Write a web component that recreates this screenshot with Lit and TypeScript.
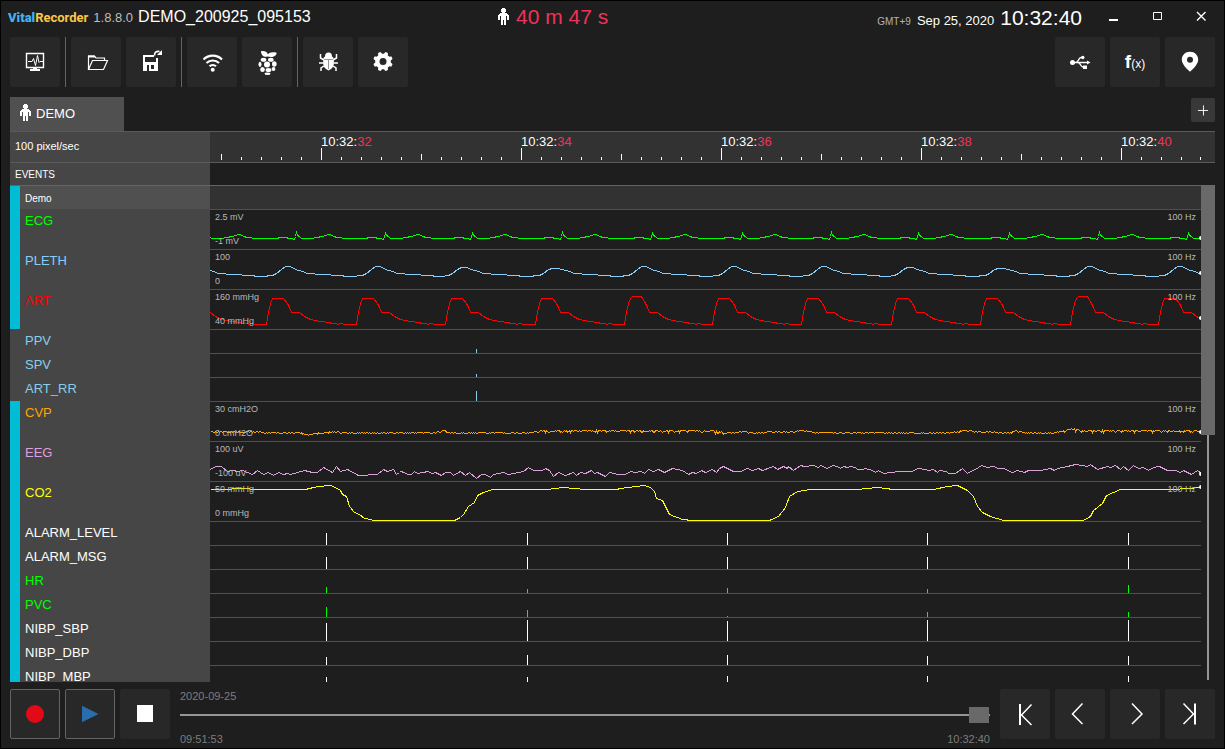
import { LitElement, html, svg, css, nothing } from "lit";
import { customElement, property, state } from "lit/decorators.js";
import { styleMap } from "lit/directives/style-map.js";

type Pt = [number, number];

interface Track {
  name: string;
  color: string;
  grouped: boolean;
  max?: string;
  min?: string;
  points?: Pt[];
  head?: number; // vertical position of the live-sample marker
  marks?: Pt[]; // x position, bar height
}

/* ---------- waveform data (lane pixels, 100 px = 1 s) ---------- */

const beats = (onsets: number[], shape: (i: number) => Pt[]): Pt[] =>
  onsets.flatMap((x, i) => shape(i).map(([dx, y]): Pt => [x + dx, y]));

const ecg = beats(
  [-4, 86, 175, 262, 352, 442, 532, 621, 708, 799, 889, 978],
  (i) => [
    [-20, 29], [-16, 28], [-10, 28], [-8, 29], [-4, 29], [-3, 30], [-2, 30],
    [-1, 27], [0, i % 3 === 1 ? 23 : 24], [1, 26], [3, 27], [5, 29], [17, 29],
    [18, 28], [22, 28], [24, 27], [27, 27], [28, 26], [30, 26], [31, 25],
    [34, 25], [35, 26], [38, 27], [40, 28], [45, 28], [46, 29],
  ]
);

const pleth = beats(
  [-12, 77, 167, 253, 344, 433, 523, 613, 699, 790, 879, 969],
  (i) => {
    const top = [17, 17, 17, 18, 19, 18][i % 5];
    return [
      [-18, 26], [-15, 26], [-11, 24], [-6, 20], [-2, top], [3, top], [8, 20],
      [15, 22], [20, 24], [27, 24], [28, 25], [43, 25], [44, 26], [54, 26],
      [58, 27], [67, 27],
    ];
  }
);

const art = beats(
  [-33, 56, 146, 235, 325, 414, 502, 591, 681, 770, 860, 948],
  (i) => {
    const top = i === 5 || i === 10 ? 7 : 9;
    return [
      [0, 35], [1, 28], [4, 14], [6, 9], [8, top], [17, top],
      [21, 14], [23, 18], [25, 23], [33, 23], [38, 27], [44, 30], [54, 32],
      [63, 33], [65, 34], [70, 34], [71, 35], [74, 34], [79, 35], [87, 35],
    ];
  }
);

const cvp: Pt[] = [];
{
  const level: Pt[] = [
    [0, 30], [14, 30], [22, 30], [44, 30], [62, 31], [90, 31], [98, 33],
    [110, 31], [126, 30], [134, 31], [190, 31], [222, 31], [234, 29], [240, 31],
    [318, 31], [333, 29], [500, 29], [516, 31], [534, 30], [542, 31], [598, 29],
    [606, 31], [740, 31], [752, 29], [800, 31], [806, 29], [814, 31], [845, 31],
    [852, 29], [863, 27], [870, 29], [990, 29],
  ];
  let seed = 7;
  let seg = 0;
  for (let x = 0; x <= 990; x += 1) {
    while (seg < level.length - 2 && x > level[seg + 1][0]) seg += 1;
    const [x0, y0] = level[seg];
    const [x1, y1] = level[seg + 1];
    seed = (seed * 1103515245 + 12345) % 2147483648;
    const r = seed / 2147483648;
    const busy = (x > 333 && x < 516) || x > 852;
    const jitter = r > 0.88 && busy ? 2 : r > 0.55 ? 1 : 0;
    cvp.push([x, Math.round(y0 + ((y1 - y0) * (x - x0)) / (x1 - x0)) + jitter]);
  }
}

/* Samples are stored at three units per pixel, in blocks with their own start. */
const unpack = (blocks: [number, number[]][], dy: number): Pt[] =>
  blocks.flatMap(([start, v]) => {
    const out: Pt[] = [];
    for (let i = 0; i < v.length; i += 2) {
      out.push([start + Math.round(v[i] / 3), Math.floor(v[i + 1] / 3) - dy]);
    }
    return out;
  });

const eeg = unpack(
  [
    [-210, [630, 238, 645, 230, 662, 230, 680, 243, 700, 240, 712, 245, 725, 240,
      755, 254, 772, 242, 788, 254, 803, 246, 820, 257, 833, 246, 848, 254, 860,
      249, 870, 254, 890, 247, 912, 240, 935, 248, 950, 246, 968, 232, 995, 247,
      1007, 229, 1020, 245, 1042, 238, 1075, 255, 1130, 252, 1148, 238, 1160,
      243, 1180, 238, 1188, 254, 1196, 247]],
    [190, [0, 245, 12, 247, 20, 254, 32, 254, 43, 245, 52, 250, 70, 248, 80, 244,
      95, 250, 105, 247, 123, 257, 135, 247, 150, 247, 158, 256, 180, 244, 195,
      257, 208, 247, 228, 266, 243, 252, 255, 252, 270, 262, 280, 252, 310, 246,
      325, 252, 370, 243, 385, 232, 400, 241, 425, 241, 435, 234, 447, 240, 460,
      260, 475, 246, 495, 257, 518, 246, 528, 257, 540, 247, 555, 249, 572, 241,
      583, 249, 592, 246, 615, 260, 628, 246, 655, 252, 675, 252, 690, 245, 705,
      247, 722, 243, 733, 250, 745, 238, 760, 245, 775, 238, 792, 247, 815, 235,
      845, 240, 865, 254, 875, 248, 887, 250, 903, 241, 915, 248, 937, 238, 948,
      246, 958, 234, 968, 229, 1000, 244, 1020, 244, 1040, 234, 1055, 240, 1073,
      236, 1085, 241, 1120, 230, 1132, 237, 1150, 230, 1160, 235, 1165, 230,
      1180, 241, 1200, 226, 1212, 230, 1240, 227, 1253, 232]],
    [610, [0, 226, 20, 234, 35, 226, 50, 230, 60, 234, 70, 228, 80, 233, 90, 229,
      105, 231, 112, 238, 125, 238, 135, 236, 155, 242, 165, 248, 175, 242, 190,
      251, 235, 244, 275, 244, 290, 235, 315, 237, 325, 241, 340, 238, 350, 246,
      358, 241, 378, 244, 385, 249, 405, 250, 425, 236, 442, 251, 455, 240, 465,
      237, 483, 226, 500, 232, 520, 230, 535, 236, 550, 234, 575, 246, 590, 240,
      612, 247, 625, 241, 660, 241, 690, 234, 702, 242, 712, 235, 740, 230, 765,
      223, 800, 228, 810, 223, 830, 238, 860, 230, 870, 233, 885, 227, 900, 237,
      910, 228, 925, 241, 940, 225, 955, 234, 970, 231, 985, 240, 1000, 233,
      1018, 230, 1040, 242, 1065, 240, 1080, 247, 1090, 241, 1112, 252, 1130,
      240, 1142, 250]],
  ],
  51
);

const co2 = unpack(
  [
    [-210, [630, 298, 690, 298, 700, 295, 797, 297, 915, 298, 940, 293, 955, 290,
      990, 286, 1010, 294, 1020, 302, 1027, 314, 1037, 320, 1046, 350, 1062, 367,
      1082, 375, 1087, 382, 1120, 391, 1200, 391]],
    [190, [0, 391, 162, 391, 180, 382, 190, 372, 205, 350, 222, 337, 230, 317,
      250, 307, 275, 298, 440, 298, 485, 292, 525, 295, 550, 298, 645, 298, 680,
      293, 732, 286, 750, 291, 762, 305, 768, 325, 785, 330, 797, 355, 808, 372,
      845, 387, 875, 391, 1107, 391, 1135, 378, 1155, 352, 1168, 320, 1190, 303,
      1230, 298]],
    [610, [0, 298, 108, 297, 170, 292, 220, 298, 340, 298, 380, 290, 410, 286,
      440, 302, 460, 318, 470, 350, 485, 367, 510, 380, 548, 391, 788, 391, 810,
      380, 820, 362, 845, 340, 857, 315, 900, 298, 1060, 298, 1142, 291]],
  ],
  91
);

const every2s = (...h: number[]): Pt[] =>
  h.map((v, i): Pt => [[116, 317, 517, 717, 918][i], v]);

const TRACKS: Track[] = [
  { name: "ECG", color: "#00ff00", grouped: true, max: "2.5 mV", min: "-1 mV", points: ecg, head: 26 },
  { name: "PLETH", color: "#87cefa", grouped: true, max: "100", min: "0", points: pleth, head: 21 },
  { name: "ART", color: "#ff0000", grouped: true, max: "160 mmHg", min: "40 mmHg", points: art, head: 26 },
  { name: "PPV", color: "#87ceeb", grouped: false, marks: [[266, 4]] },
  { name: "SPV", color: "#87ceeb", grouped: false, marks: [[266, 3]] },
  { name: "ART_RR", color: "#87ceeb", grouped: false, marks: [[266, 10]] },
  { name: "CVP", color: "#ffa500", grouped: true, max: "30 cmH2O", min: "0 cmH2O", points: cvp, head: 28 },
  { name: "EEG", color: "#dda0dd", grouped: true, max: "100 uV", min: "-100 uV", points: eeg, head: 30 },
  { name: "CO2", color: "#ffff00", grouped: true, max: "50 mmHg", min: "0 mmHg", points: co2, head: 3 },
  { name: "ALARM_LEVEL", color: "#ffffff", grouped: true, marks: every2s(12, 12, 12, 12, 12) },
  { name: "ALARM_MSG", color: "#ffffff", grouped: true, marks: every2s(12, 12, 12, 12, 12) },
  { name: "HR", color: "#00ff00", grouped: true, marks: every2s(6, 4, 5, 4, 8) },
  { name: "PVC", color: "#00ff00", grouped: true, marks: every2s(10, 7, 1, 5, 5) },
  { name: "NIBP_SBP", color: "#ffffff", grouped: true, marks: every2s(18, 21, 20, 21, 21) },
  { name: "NIBP_DBP", color: "#ffffff", grouped: true, marks: every2s(8, 10, 10, 9, 9) },
  { name: "NIBP_MBP", color: "#ffffff", grouped: true, marks: every2s(12, 12, 13, 13, 13) },
];

/* ---------- icons, drawn in a 26 px box ---------- */

const stroke = (d: string, w = 1) =>
  svg`<path d=${d} fill="none" stroke="#fff" stroke-width=${w}></path>`;
const fill = (d: string, c = "#fff") => svg`<path d=${d} fill=${c}></path>`;
const icon = (body: unknown) =>
  html`<svg width="26" height="26" viewBox="0 0 26 26" aria-hidden="true">${body}</svg>`;

const person = html`<svg class="person" width="11" height="17" viewBox="0 0 11 17" aria-hidden="true">
  <path fill="#fff" shape-rendering="crispEdges" d="M4 0h3v1h1v3h-1v1h2v1h1v1h1v5h-2v-4h-1v9h-2v-5h-1v5h-2v-9h-1v4h-2v-5h1v-1h1v-1h2v-1h-1v-3h1z"></path>
</svg>`;

const gearPath = (() => {
  const out: string[] = [];
  for (let i = 0; i <= 96; i += 1) {
    const a = (i / 96) * Math.PI * 2;
    const w = Math.max(-1, Math.min(1, Math.cos(a * 8 + Math.PI) * 2.4));
    const r = 8.8 + w;
    out.push(`${(13 + r * Math.cos(a)).toFixed(2)} ${(12.5 + r * Math.sin(a)).toFixed(2)}`);
  }
  return `M${out.join("L")}Z`;
})();

const ICONS = {
  monitor: icon(svg`
    ${stroke("M4.5 4.5h17v14h-17z", 1.4)}
    ${stroke("M6 12.5h4l1.500-3 2 7 2-10 1.500 7 1-1h3")}
    ${fill("M11 18h4v2h3v2h-10v-2h3z")}`),
  folder: icon(svg`
    ${stroke("M5.5 20.500V7h6l1.500 2h8.500v2.500", 1.2)}
    ${fill("M5 6.500h6.500l1.500 2h-8z")}
    ${stroke("M5.500 20.500l4-9h15l-4 9z", 1.2)}`),
  save: icon(svg`
    <path fill="#fff" fill-rule="evenodd" d="M5 6h11v2h-9v5h11v-4h2v13h-15zM9 16v6h2v-6zM13 16v4h3v-4z" shape-rendering="crispEdges"></path>
    ${stroke("M16.500 6.500c0-3 1.500-4.500 5-4", 1.600)}
    ${fill("M24 1v5h-5z")}`),
  wifi: icon(svg`
    ${stroke("M4.500 10.500a13 13 0 0 1 18.500 0", 2.200)}
    ${stroke("M7.500 14a9 9 0 0 1 12.500 0", 2.200)}
    ${stroke("M10.500 17.300a4.700 4.700 0 0 1 6.500 0", 2.200)}
    <circle cx="13.700" cy="20.800" r="2" fill="#fff"></circle>`),
  berry: icon(svg`
    ${fill("M13.600 7.500c-3.500 1-6.500-1-6.600-5.300 3-.6 6 .3 6.800 3 1.500-1.500 4.500-2.500 8.800-1.500 0 3.200-3.800 5.300-9 3.800z")}
    <g fill="#fff">
      <circle cx="13" cy="15.500" r="3"></circle>
      <ellipse cx="9.500" cy="10.700" rx="2.800" ry="2"></ellipse>
      <ellipse cx="16.800" cy="10.700" rx="2.800" ry="2"></ellipse>
      <ellipse cx="6" cy="15.300" rx="1.500" ry="2.600"></ellipse>
      <ellipse cx="20.300" cy="15" rx="2.300" ry="2.800"></ellipse>
      <ellipse cx="8.500" cy="20.500" rx="2.300" ry="2.500"></ellipse>
      <ellipse cx="14.500" cy="21" rx="2.900" ry="2"></ellipse>
      <ellipse cx="19.500" cy="20" rx="1.900" ry="2"></ellipse>
      <ellipse cx="13.500" cy="24.700" rx="3" ry="1.200"></ellipse>
    </g>`),
  bug: icon(svg`
    ${fill("M10 7.500a3.500 4 0 0 1 7 0l1.500 1.200v1.300h-10v-1.300z")}
    ${fill("M8.500 10.500h10c1 4 .3 9-5 11-5.300-2-6-7-5-11z")}
    ${stroke("M9 11l-3.500-2v-4M18 11l3.500-2v-4M8.500 14h-4.500M18.500 14h4.500M9 17l-3 2v3M18 17l3 2v3", 1.500)}
    <path fill="none" stroke="#282828" stroke-width=".5" d="M13.500 11v9"></path>`),
  gear: icon(svg`${fill(gearPath)}<circle cx="13" cy="12.500" r="3.500" fill="#282828"></circle>`),
  usb: icon(svg`
    <circle cx="5.500" cy="13.500" r="2.500" fill="#fff"></circle>
    ${stroke("M5.500 13.500h15M9 13.500c2.500 0 2.500-5 5-5h1.500M11 13.500c2.500 0 2.500 4.500 5 4.500h1.500", 1.400)}
    ${fill("M20 11.500l3.500 2-3.500 2z")}
    <circle cx="15.800" cy="8.500" r="1.700" fill="#fff"></circle>
    ${fill("M16 16.500h4v3.500h-4z")}`),
  pin: icon(svg`
    ${fill("M13 2.700c4.700 0 8.200 3.400 8.200 7.800 0 4.500-4.200 8.500-8.200 12.300-4-3.800-8.200-7.800-8.200-12.300 0-4.400 3.500-7.800 8.200-7.800z")}
    <circle cx="13" cy="10.800" r="3" fill="#282828"></circle>`),
  record: icon(svg`<circle cx="13" cy="13" r="9" fill="#e20a17"></circle>`),
  play: icon(fill("M5 4.700l16.500 8.300-16.500 8.300z", "#2a6dac")),
  stop: icon(fill("M5 4h16v17h-16z")),
  first: icon(svg`${stroke("M8 3v21", 2)}${stroke("M19.500 3.500l-10 10.500 10 10", 1.500)}`),
  prev: icon(stroke("M15.500 2.500l-10 10.500 10 10", 1.500)),
  next: icon(stroke("M10 2.500l10 10.500-10 10", 1.500)),
  last: icon(svg`${stroke("M6.500 2.500l10 10.500-10 10", 1.500)}${stroke("M18 2.500v21", 2)}`),
};

const TOOLS: ([string, unknown] | null)[] = [
  ["Monitor", ICONS.monitor],
  null,
  ["Open", ICONS.folder],
  ["Save", ICONS.save],
  null,
  ["Network", ICONS.wifi],
  ["Raspberry Pi", ICONS.berry],
  null,
  ["Report a bug", ICONS.bug],
  ["Settings", ICONS.gear],
];

/* ---------- one row of the track list ---------- */

@customElement("track-row")
class TrackRow extends LitElement {
  @property({ attribute: false }) track!: Track;

  static styles = css`
    :host {
      display: flex;
      flex: none;
      color: #b9b9b9;
    }
    .side {
      flex: 0 0 200px;
      box-sizing: border-box;
      border-left: 10px solid #464646;
      background: #464646;
      padding: 2px 0 0 5px;
      font-size: 13px;
      line-height: 20px;
    }
    .side.grouped {
      border-left-color: #00bcd4;
    }
    .lane {
      flex: 1;
      position: relative;
      box-sizing: border-box;
      height: 24px;
      border-top: 1px solid #505050;
      overflow: hidden;
    }
    .lane.tall {
      height: 40px;
    }
    svg {
      position: absolute;
      inset: -1px 0 0 0;
      width: 100%;
      height: calc(100% + 1px);
      shape-rendering: crispEdges;
    }
    .scale {
      position: relative;
      display: grid;
      grid-template-columns: 1fr auto;
      row-gap: 12px;
      padding: 1px 5px;
      font-size: 9px;
      line-height: 12px;
    }
    .head {
      position: absolute;
      right: 0;
      width: 2px;
      height: 4px;
      background: #fff;
      border-radius: 2px 0 0 2px;
    }
  `;

  render() {
    const t = this.track;
    return html`
      <div class="side ${t.grouped ? "grouped" : ""}">
        <span style=${styleMap({ color: t.color })}>${t.name}</span>
      </div>
      <div class="lane ${t.points ? "tall" : ""}">
        <svg aria-hidden="true">
          ${t.points
            ? svg`<polyline fill="none" stroke=${t.color} stroke-width="1"
                points=${t.points.map(([x, y]) => `${x + 0.5},${y + 0.5}`).join(" ")}></polyline>`
            : t.marks?.map(
                ([x, h]) => svg`<rect x=${x} y=${24 - h} width="1" height=${h} fill=${t.color}></rect>`
              )}
        </svg>
        ${t.points
          ? html`<div class="scale"><span>${t.max}</span><span>100 Hz</span><span>${t.min}</span></div>
              <span class="head" style=${styleMap({ top: `${t.head}px` })}></span>`
          : nothing}
      </div>
    `;
  }
}

/* ---------- application ---------- */

@customElement("app-root")
class AppRoot extends LitElement {
  @state() private position = 2447;

  static styles = css`
    :host {
      display: flex;
      flex-direction: column;
      box-sizing: border-box;
      height: 100vh;
      border: 1px solid #000;
      padding: 0 9px;
      background: #1e1e1e;
      color: #fff;
      font-family: "Liberation Sans", Arial, sans-serif;
      overflow: hidden;
    }
    button {
      display: flex;
      align-items: center;
      justify-content: center;
      box-sizing: border-box;
      width: 50px;
      height: 50px;
      padding: 0;
      border: 0;
      border-radius: 2px;
      background: #282828;
      color: #fff;
      font-family: inherit;
    }
    .title {
      display: flex;
      align-items: center;
      height: 32px;
      margin-bottom: 4px;
    }
    .name {
      flex: 0 0 calc(40% + 6px);
      display: flex;
      align-items: baseline;
      gap: 5px;
      box-sizing: border-box;
      margin: 0;
      font-size: 16px;
      font-weight: 400;
      white-space: nowrap;
    }
    .brand {
      margin-left: -2px;
      color: #f9c846;
      font: 700 13px Roboto, sans-serif;
    }
    .brand b {
      color: #42b2f0;
    }
    .version {
      color: #bdbdbd;
      font-size: 13px;
    }
    .person {
      margin-bottom: 2px;
    }
    .elapsed {
      display: flex;
      align-items: center;
      gap: 7px;
      color: #f0325a;
      font-size: 21px;
    }
    .clock {
      display: flex;
      align-items: baseline;
      gap: 6px;
      margin-left: auto;
      padding-top: 2px;
      font-size: 13px;
    }
    .zone {
      color: #b4b4b4;
      font-size: 10px;
    }
    .time {
      font-size: 21px;
    }
    .window {
      display: flex;
      margin: 0 -8px 0 9px;
    }
    .window button {
      width: 44px;
      height: 32px;
      background: none;
    }
    .tools,
    .controls {
      display: flex;
      gap: 5px;
    }
    .divider {
      width: 1px;
      background: #646464;
    }
    .push {
      margin-left: auto;
    }
    .fx {
      font-size: 19px;
      font-weight: 700;
      align-items: baseline;
      line-height: 50px;
    }
    .fx small {
      font-size: 12px;
      font-weight: 400;
    }
    .tabs {
      display: flex;
      justify-content: space-between;
      align-items: flex-start;
      padding-top: 10px;
    }
    .tab {
      justify-content: flex-start;
      gap: 5px;
      width: 114px;
      height: 34px;
      padding: 0 0 2px 10px;
      border-radius: 0;
      background: #505050;
      font-size: 13px;
    }
    .add {
      width: 24px;
      height: 24px;
      margin-top: 1px;
      background: #383838;
    }
    .row {
      display: flex;
      flex: none;
      border-top: 1px solid #5a5a5a;
    }
    .cell {
      flex: 0 0 200px;
      box-sizing: border-box;
      height: 22px;
      padding-left: 5px;
      background: #464646;
      font-size: 10px;
      line-height: 24px;
    }
    .cell.speed {
      height: 30px;
      font-size: 11px;
      line-height: 28px;
    }
    .ruler {
      position: relative;
      flex: 1;
      height: 30px;
      background: #323232;
      overflow: hidden;
    }
    .ruler svg {
      position: absolute;
      inset: 0;
      width: 100%;
      height: 100%;
    }
    .stamp {
      position: absolute;
      top: 2px;
      font-size: 13px;
      line-height: 16px;
    }
    .stamp span {
      color: #f0325a;
    }
    .board {
      flex: 1;
      display: flex;
      min-height: 0;
    }
    .tracks {
      flex: 1;
      display: flex;
      flex-direction: column;
      min-width: 0;
      overflow: hidden;
    }
    .device {
      display: flex;
      flex: none;
      box-sizing: border-box;
      height: 24px;
      border-top: 1px solid #646464;
      background: #323232;
    }
    .device .cell {
      height: 23px;
      border-left: 10px solid #00bcd4;
      background: #505050;
      line-height: 25px;
    }
    input {
      appearance: none;
      margin: 0;
      border-radius: 0;
    }
    .scroll {
      writing-mode: vertical-lr;
      width: 14px;
      height: auto;
      margin-bottom: 2px;
      background: linear-gradient(#969696, #969696) center / 2px 100% no-repeat;
    }
    .scroll::-webkit-slider-thumb {
      appearance: none;
      width: 14px;
      height: 250px;
      background: #696969;
    }
    .controls {
      padding: 7px 0 2px;
    }
    .outlined {
      border: 1px solid #646464;
    }
    .timeline {
      flex: 1;
      display: flex;
      flex-direction: column;
      margin: 0 5px;
      color: #7d7d7d;
      font-size: 11px;
      line-height: 14px;
    }
    .seek {
      width: 100%;
      height: 16px;
      margin: 4px 0 9px;
      background: linear-gradient(#969696, #969696) center / 100% 2px no-repeat;
    }
    .seek::-webkit-slider-thumb {
      appearance: none;
      width: 20px;
      height: 16px;
      background: #696969;
    }
    .range {
      display: flex;
      justify-content: space-between;
    }
  `;

  private ticks() {
    return Array.from({ length: 50 }, (_, k) => {
      const h = k % 10 === 5 ? 12 : k % 5 === 0 ? 6 : 3;
      return svg`<rect x=${11 + k * 20 - (k === 49 ? 1 : 0)} y=${28 - h} width="1" height=${h} fill="#fff"></rect>`;
    });
  }

  render() {
    return html`
      <header class="title">
        <h1 class="name">
          <span class="brand"><b>Vital</b>Recorder</span>
          <span class="version">1.8.8.0</span>
          <span>DEMO_200925_095153</span>
        </h1>
        <div class="elapsed">${person}<span>40 m 47 s</span></div>
        <div class="clock">
          <span class="zone">GMT+9</span><span>Sep 25, 2020</span><span class="time">10:32:40</span>
        </div>
        <div class="window">
          <button aria-label="Minimize">${icon(fill("M9 15h9v2h-9z"))}</button>
          <button aria-label="Maximize">${icon(stroke("M9.500 8.500h8v7h-8z", 1))}</button>
          <button aria-label="Close">${icon(stroke("M9 8l8.500 8.500M17.500 8l-8.500 8.500", 1.400))}</button>
        </div>
      </header>

      <nav class="tools">
        ${TOOLS.map((t) =>
          t ? html`<button aria-label=${t[0]}>${t[1]}</button>` : html`<span class="divider"></span>`
        )}
        <button class="push" aria-label="USB devices">${ICONS.usb}</button>
        <button class="fx">f<small>(x)</small></button>
        <button aria-label="Location">${ICONS.pin}</button>
      </nav>

      <div class="tabs">
        <button class="tab">${person}DEMO</button>
        <button class="add" aria-label="Add tab">${icon(stroke("M7.500 13.500h11M13.500 8v11"))}</button>
      </div>

      <div class="row">
        <div class="cell speed">100 pixel/sec</div>
        <div class="ruler">
          <svg aria-hidden="true">${this.ticks()}</svg>
          ${[32, 34, 36, 38, 40].map(
            (s, i) => html`<div class="stamp" style=${styleMap({ left: `${111 + i * 200}px` })}>10:32:<span>${s}</span></div>`
          )}
        </div>
      </div>
      <div class="row"><div class="cell">EVENTS</div></div>

      <main class="board">
        <div class="tracks">
          <div class="device"><div class="cell">Demo</div></div>
          ${TRACKS.map((t) => html`<track-row .track=${t}></track-row>`)}
        </div>
        <input class="scroll" type="range" min="0" max="100" .value=${"0"} aria-label="Scroll tracks" />
      </main>

      <footer class="controls">
        <button class="outlined" aria-label="Record">${ICONS.record}</button>
        <button class="outlined" aria-label="Play">${ICONS.play}</button>
        <button aria-label="Stop">${ICONS.stop}</button>
        <div class="timeline">
          <label for="seek">2020-09-25</label>
          <input
            class="seek"
            id="seek"
            type="range"
            min="0"
            max="2450"
            .value=${String(this.position)}
            @input=${(e: Event) => (this.position = Number((e.target as HTMLInputElement).value))}
          />
          <div class="range"><span>09:51:53</span><span>10:32:40</span></div>
        </div>
        <button aria-label="First">${ICONS.first}</button>
        <button aria-label="Previous">${ICONS.prev}</button>
        <button aria-label="Next">${ICONS.next}</button>
        <button aria-label="Last">${ICONS.last}</button>
      </footer>
    `;
  }
}
